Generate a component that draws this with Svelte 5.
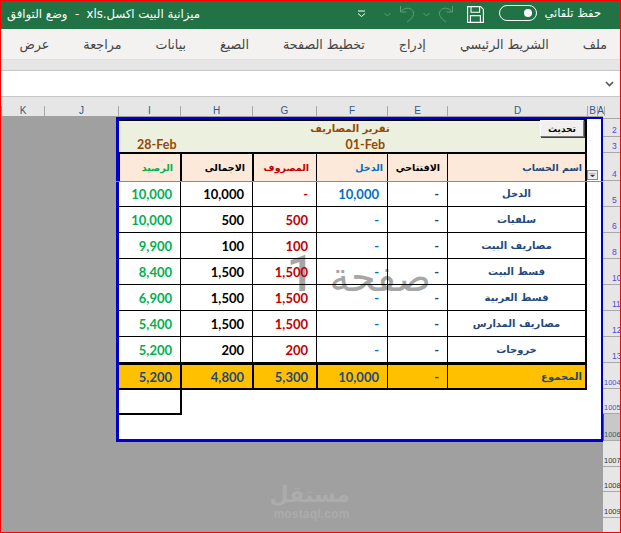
<script lang="ts">
  const tabs = ['ملف', 'الشريط الرئيسي', 'إدراج', 'تخطيط الصفحة', 'الصيغ', 'بيانات', 'مراجعة', 'عرض'];

  // listed right to left, same as the sheet
  const columns = [
    { label: '', w: 16 }, { label: 'A', w: 7 }, { label: 'B', w: 10 }, { label: 'D', w: 140 },
    { label: 'E', w: 60 }, { label: 'F', w: 71 }, { label: 'G', w: 64 }, { label: 'H', w: 72 },
    { label: 'I', w: 62 }, { label: 'J', w: 74 }, { label: 'K', w: 43 }
  ];

  const rowHeads = [
    { label: '', h: 3 }, { label: '2', h: 18 }, { label: '3', h: 16 }, { label: '4', h: 28 },
    { label: '5', h: 26 }, { label: '6', h: 26 }, { label: '8', h: 26 }, { label: '10', h: 26 },
    { label: '11', h: 26 }, { label: '12', h: 26 }, { label: '13', h: 26 }, { label: '1004', h: 26 },
    { label: '1005', h: 25 }, { label: '1006', h: 27, selected: true }, { label: '1007', h: 26, dark: true },
    { label: '1008', h: 25, dark: true }, { label: '1009', h: 26, dark: true }
  ];

  const rows = [
    ['الدخل', '-', '10,000', '-', '10,000', '10,000'],
    ['سلفيات', '-', '-', '500', '500', '10,000'],
    ['مصاريف البيت', '-', '-', '100', '100', '9,900'],
    ['قسط البيت', '-', '-', '1,500', '1,500', '8,400'],
    ['قسط العربية', '-', '-', '1,500', '1,500', '6,900'],
    ['مصاريف المدارس', '-', '-', '1,500', '1,500', '5,400'],
    ['خروجات', '-', '-', '200', '200', '5,200']
  ];
  const totals = ['المجموع', '-', '10,000', '5,300', '4,800', '5,200'];
  const heads = ['اسم الحساب', 'الافتتاحي', 'الدخل', 'المصروف', 'الاجمالى', 'الرصيد'];
  const tone = ['name', 'open', 'income', 'spend', 'sum', 'balance'];
</script>

<div class="window">
  <header class="titlebar">
    <span class="autosave">حفظ تلقائي</span>
    <span class="toggle"><i></i></span>
    <svg class="save" width="17" height="17" viewBox="0 0 17 17" fill="none" stroke="#fff" stroke-width="1.1">
      <path d="M.6.6h13l2.8 2.8v13H.6z" />
      <path d="M4 .6v5.6h8.6V.6M3.4 16.4V9.6h10v6.8" />
    </svg>
    <svg class="redo" width="16" height="18" viewBox="0 0 16 18" fill="none" stroke="#5f9c7c">
      <path d="M14.5 1v6H8.5M14.5 7C11 2.500 5 2 2.500 5.500 0 9 2 13 8 17" />
    </svg>
    <svg class="chev" width="7" height="5" viewBox="0 0 7 5" fill="none" stroke="#5f9c7c"><path d="M.5 1l3 3 3-3" /></svg>
    <svg class="undo" width="16" height="18" viewBox="0 0 16 18" fill="none" stroke="#5f9c7c">
      <path d="M1.500 1v6h6M1.500 7C5 2.500 11 2 13.500 5.500 16 9 14 13 8 17" />
    </svg>
    <svg class="chev" width="7" height="5" viewBox="0 0 7 5" fill="none" stroke="#5f9c7c"><path d="M.5 1l3 3 3-3" /></svg>
    <svg class="qat" width="9" height="8" viewBox="0 0 9 8" fill="none" stroke="#fff"><path d="M1 1h7M1 3.500l3.500 3 3.500-3" /></svg>
    <span class="doc">ميزانية البيت اكسل.xls&nbsp; - &nbsp;وضع التوافق</span>
  </header>

  <nav class="tabs">
    {#each tabs as tab}
      <span>{tab}</span>
    {/each}
  </nav>

  <div class="band"></div>

  <div class="formula">
    <svg width="9" height="6" viewBox="0 0 9 6" fill="none" stroke="#555" stroke-width="1.6"><path d="M1 1l3.500 3.500L8 1" /></svg>
  </div>

  <div class="gap"></div>

  <div class="colheads">
    {#each columns as col}
      <span style="width:{col.w}px">{col.label}</span>
    {/each}
  </div>

  <div class="sheet">
    <div class="rowheads">
      {#each rowHeads as row}
        <span
          class:long={row.label.length > 2}
          class:selected={row.selected}
          class:dark={row.dark}
          style="height:{row.h}px">{row.label}</span>
      {/each}
    </div>

    <div class="grid-area">
      <div class="page">
        <div class="watermark">صفحة <span>1</span></div>
        <div class="report">
          <div class="banner">
            <div class="banner-title">تقرير المصاريف</div>
            <div class="dates">
              <span class="date-from">01-Feb</span>
              <span class="date-to">28-Feb</span>
            </div>
            <button class="refresh">تحديث</button>
          </div>

          <div class="row heads">
            {#each heads as head, i}
              <div class="cell {tone[i]}">{head}</div>
            {/each}
            <span class="filter">
              <svg width="7" height="5" viewBox="0 0 7 5"><path d="M0 0h7M1.500 2h4L3.500 4z" fill="#333" stroke="#333" stroke-width=".5" /></svg>
            </span>
          </div>

          {#each rows as row}
            <div class="row data">
              {#each row as value, i}
                <div class="cell {tone[i]}">{value}</div>
              {/each}
            </div>
          {/each}

          <div class="row total">
            {#each totals as value}
              <div class="cell">{value}</div>
            {/each}
          </div>

          <div class="tail"></div>
        </div>
        <div class="freeze"></div>
      </div>
      <div class="mostaql">
        <b>مستقل</b>
        <small>mostaql.com</small>
      </div>
    </div>
  </div>
</div>

<style>
  :global(body) {
    margin: 0;
    background: #a0a0a0;
  }

  .window {
    box-sizing: border-box;
    width: 621px;
    height: 533px;
    border: 1px solid #f00;
    display: flex;
    flex-direction: column;
    overflow: hidden;
    direction: rtl;
    font-family: "DejaVu Sans", sans-serif;
    background: #e6e6e6;
  }

  .titlebar {
    flex: 0 0 28px;
    display: flex;
    align-items: center;
    background: #217346;
    color: #fff;
    padding-right: 19px;
    font-size: 11.500px;
    white-space: nowrap;
  }

  .autosave {
    width: 57px;
    margin-bottom: 4px;
  }

  .toggle {
    box-sizing: border-box;
    width: 38px;
    height: 16px;
    margin: 0 7px 5px 8px;
    border: 1px solid #fff;
    border-radius: 8px;
    display: flex;
    align-items: center;
    padding-right: 4px;
  }

  .toggle i {
    width: 8px;
    height: 8px;
    border-radius: 50%;
    background: #fff;
  }

  .save {
    margin: 0 7px 2px 13px;
  }

  .redo {
    margin-bottom: 2px;
  }

  .chev {
    margin: 0 8px 2px 8px;
  }

  .undo {
    margin: 0 0 2px 0;
  }

  .qat {
    margin: 0 10px 2px 0;
  }

  .doc {
    margin-right: auto;
    margin-left: 6px;
    margin-bottom: 3px;
    font-size: 11.700px;
  }

  .tabs {
    flex: 0 0 30px;
    display: flex;
    align-items: center;
    gap: 34px;
    padding-right: 13px;
    background: #f3f2f1;
    color: #444;
    font-size: 12.700px;
    white-space: nowrap;
  }

  .band {
    flex: 0 0 11px;
    background: #e6e6e6;
    border-top: 1px dotted #d8d8d8;
    box-sizing: border-box;
  }

  .formula {
    flex: 0 0 27px;
    box-sizing: border-box;
    background: #fff;
    border-top: 1px solid #c6c6c6;
    border-bottom: 1px solid #c6c6c6;
    display: flex;
    align-items: center;
    padding-right: 6px;
  }

  .gap {
    flex: 0 0 9px;
  }

  .colheads {
    flex: 0 0 10px;
    display: flex;
    font: 10px/10px "Liberation Sans", sans-serif;
    color: #2f5a86;
    direction: rtl;
  }

  .colheads span {
    box-sizing: border-box;
    flex: none;
    text-align: center;
    border-left: 1px solid #a8a8a8;
    overflow: hidden;
  }

  .sheet {
    flex: 1;
    display: flex;
    min-height: 0;
  }

  .rowheads {
    flex: 0 0 17px;
    width: 17px;
    min-width: 0;
    overflow: hidden;
    display: flex;
    flex-direction: column;
    background: #e6e6e6;
    font: 8.500px/11px "Liberation Sans", sans-serif;
    color: #4a4ae0;
    direction: ltr;
  }

  .rowheads span {
    box-sizing: border-box;
    flex: none;
    display: flex;
    align-items: flex-end;
    padding-left: 9px;
    border-bottom: 1px solid #a8a8a8;
    white-space: nowrap;
    overflow: hidden;
  }

  .rowheads .long {
    padding-left: 1px;
    font-size: 7.500px;
  }

  .rowheads .selected {
    background: #c8c8c8;
    border-left: 1px solid #217346;
    color: #3d5a60;
    padding-left: 0;
  }

  .rowheads .dark {
    color: #333;
  }

  .grid-area {
    flex: 1;
    min-width: 0;
    position: relative;
    background: #a0a0a0;
    padding-top: 1px;
  }

  .page {
    position: relative;
    box-sizing: border-box;
    width: 487px;
    height: 325px;
    background: #fff;
    border-style: solid;
    border-color: #0000cc;
    border-width: 2px 2px 3px 3px;
    padding-right: 14px;
  }

  .report {
    position: relative;
    width: 468px;
    font-weight: 700;
  }

  .banner {
    position: relative;
    box-sizing: border-box;
    height: 35px;
    background: #ebf1de;
    border: 2px solid #000;
    border-left: none;
    color: #974706;
  }

  .banner-title {
    text-align: center;
    font-size: 10px;
    line-height: 15px;
    margin: 0 0 0 -4px;
  }

  .dates {
    display: flex;
    font: 700 12.500px/15px Lato, sans-serif;
    padding-right: 200px;
    padding-top: 1px;
  }

  .dates span {
    direction: ltr;
  }

  .date-to {
    margin-right: 169px;
  }

  .refresh {
    position: absolute;
    top: -1px;
    right: 1px;
    box-sizing: border-box;
    width: 44px;
    height: 17px;
    padding: 0;
    background: #f0f0f0;
    border: 1px solid;
    border-color: #fff #777 #777 #fff;
    box-shadow: 1px 1px 0 #444;
    font: 700 9px "DejaVu Sans", sans-serif;
    color: #000;
  }

  .row {
    display: grid;
    grid-template-columns: 138px 60px 71px 64px 72px 61px;
    border-right: 2px solid #000;
    position: relative;
  }

  .cell {
    box-sizing: border-box;
    border-left: 1px solid #000;
    display: flex;
    align-items: center;
    justify-content: flex-end;
    direction: ltr;
    padding-right: 8px;
    font: 700 13px Lato, sans-serif;
    white-space: nowrap;
    overflow: hidden;
  }

  .cell:first-child {
    justify-content: center;
    direction: rtl;
    padding-right: 0;
    font: 700 10px "DejaVu Sans", sans-serif;
    color: #1f497d;
  }

  .cell:last-child {
    border-left: none;
  }

  .name { color: #1f497d; }
  .open { color: #1f497d; }
  .income { color: #0070c0; }
  .spend { color: #c00000; }
  .sum { color: #000; }
  .balance { color: #00b050; }

  .heads {
    height: 27px;
    background: #fde9d9;
  }

  .heads .cell {
    justify-content: flex-start;
    direction: rtl;
    padding: 0 7px 0 0;
    font: 700 9.500px "DejaVu Sans", sans-serif;
  }

  .heads .cell:first-child {
    padding-right: 3px;
  }

  .heads .income {
    padding-right: 4px;
  }

  .heads .open {
    color: #000;
  }

  .heads .spend,
  .heads .sum {
    border-left-width: 2px;
  }

  .filter {
    position: absolute;
    top: 16px;
    right: -13px;
    box-sizing: border-box;
    width: 11px;
    height: 10px;
    background: #ececec;
    border: 1px solid #888;
    display: flex;
    align-items: center;
    justify-content: center;
  }

  .data {
    height: 26px;
    border-bottom: 1px solid #000;
    box-sizing: border-box;
  }

  .data:last-of-type {
    border-bottom: none;
  }

  .total {
    box-sizing: border-box;
    height: 27px;
    background: #ffc000;
    border-top: 2px solid #000;
    border-bottom: 2px solid #000;
  }

  .total .cell {
    color: #1f497d;
  }

  .total .cell:nth-child(n + 3):nth-child(-n + 5) {
    border-left-width: 2px;
  }

  .total .cell:first-child {
    justify-content: flex-start;
    padding-right: 3px;
  }

  .tail {
    box-sizing: border-box;
    height: 25px;
    width: 63px;
    margin-right: auto;
    border-right: 2px solid #000;
    border-bottom: 2px solid #000;
  }

  .watermark {
    position: absolute;
    top: 130px;
    left: 182px;
    width: 130px;
    font-size: 40px;
    line-height: 50px;
    color: #a6a6a6;
    white-space: nowrap;
  }

  .watermark span {
    font: 500 50px/50px Roboto, sans-serif;
    margin-right: 2px;
  }

  .freeze {
    position: absolute;
    top: 62px;
    left: -3px;
    right: -2px;
    height: 1px;
    background: #8c8c8c;
  }

  .mostaql {
    position: absolute;
    left: 272px;
    top: 368px;
    width: 77px;
    text-align: center;
    color: #acacac;
    line-height: 1;
  }

  .mostaql b {
    display: block;
    font-size: 22px;
  }

  .mostaql small {
    display: block;
    font: 700 12px "Liberation Sans", sans-serif;
    letter-spacing: 0.2px;
    direction: ltr;
    margin-top: 1px;
  }
</style>
